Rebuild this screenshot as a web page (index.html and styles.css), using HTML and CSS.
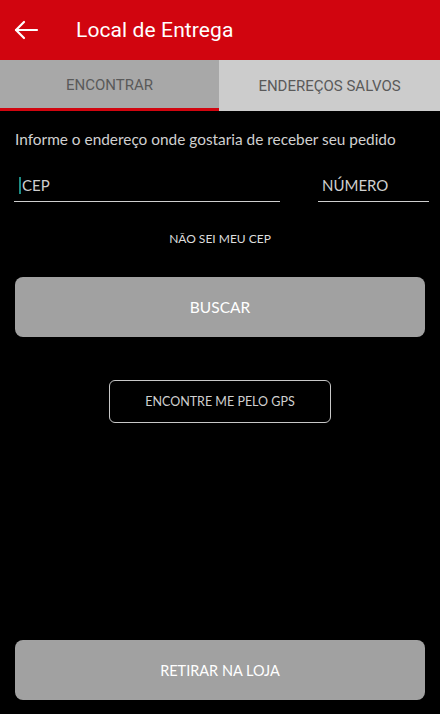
FILE: index.html
```html
<!DOCTYPE html>
<html lang="pt-BR">
<head>
    <meta charset="UTF-8">
    <meta name="viewport" content="width=device-width, initial-scale=1.0">
    <title>Local de Entrega</title>
    <link rel="stylesheet" href="styles.css">
</head>
<body>
    <header class="toolbar">
        <button class="back-btn" aria-label="Voltar">
            <svg width="26" height="20" viewBox="0 0 26 20" fill="none" stroke="#fff" stroke-width="2.2" stroke-linecap="round" stroke-linejoin="round">
                <path d="M24 10H3"/>
                <path d="M11 2L3 10l8 8"/>
            </svg>
        </button>
        <h1 class="toolbar-title">Local de Entrega</h1>
    </header>

    <nav class="tabs">
        <div class="tab tab-active">ENCONTRAR</div>
        <div class="tab">ENDEREÇOS SALVOS</div>
    </nav>

    <main class="content">
        <p class="intro">Informe o endereço onde gostaria de receber seu pedido</p>

        <div class="fields">
            <div class="field field-cep">
                <span class="cursor"></span><span class="placeholder">CEP</span>
            </div>
            <div class="field field-num">
                <span class="placeholder">NÚMERO</span>
            </div>
        </div>

        <a class="link-cep">NÃO SEI MEU CEP</a>

        <button class="btn-solid">BUSCAR</button>

        <button class="btn-outline">ENCONTRE ME PELO GPS</button>

        <div class="spacer"></div>

        <button class="btn-solid btn-store">RETIRAR NA LOJA</button>
    </main>
</body>
</html>
```

FILE: styles.css
```css
body {
    margin: 0;
    padding: 0;
    background-color: #000;
    font-family: 'Lato', 'Open Sans', sans-serif;
    width: 440px;
    height: 714px;
    display: flex;
    flex-direction: column;
    overflow: hidden;
}

.toolbar {
    background-color: #d1050f;
    height: 60px;
    display: flex;
    align-items: center;
    flex-shrink: 0;
}

.back-btn {
    background: none;
    border: none;
    padding: 0;
    margin-left: 13px;
    width: 26px;
    height: 20px;
    display: flex;
}

.toolbar-title {
    margin: 0 0 0 37px;
    color: #fff;
    font-family: 'Roboto', sans-serif;
    font-weight: 400;
    font-size: 21px;
    letter-spacing: 0.1px;
}

.tabs {
    display: flex;
    height: 51px;
    flex-shrink: 0;
}

.tab {
    flex: 1;
    display: flex;
    align-items: center;
    justify-content: center;
    background-color: #cccccc;
    color: #5a5a5a;
    font-family: 'Roboto', sans-serif;
    font-size: 15px;
    box-sizing: border-box;
}

.tab-active {
    flex: 0 0 219px;
    background-color: #a8a8a8;
    border-bottom: 3px solid #d1050f;
    padding-top: 1px;
}

.content {
    flex: 1;
    display: flex;
    flex-direction: column;
    padding: 0 15px 14px;
}

.intro {
    margin: 18px 0 0;
    color: #d0d0d0;
    font-size: 15.4px;
    line-height: 20px;
}

.fields {
    display: flex;
    justify-content: space-between;
    margin-top: 22px;
}

.field {
    height: 31px;
    border-bottom: 1px solid #cfcfcf;
    display: flex;
    align-items: center;
    color: #cfcfcf;
    font-size: 15px;
    box-sizing: border-box;
    padding-bottom: 2px;
}

.field-cep {
    width: 266px;
    margin-left: -1px;
    padding-left: 5px;
}

.field-num {
    width: 111px;
    margin-right: -4px;
    padding-left: 4px;
}

.cursor {
    width: 2px;
    height: 17px;
    background-color: #1e8c84;
    margin-right: 1px;
}

.link-cep {
    align-self: center;
    margin-top: 29px;
    color: #dddddd;
    font-size: 12px;
}

.btn-solid {
    margin-top: 31px;
    height: 60px;
    width: 100%;
    border: none;
    border-radius: 8px;
    background-color: #a1a1a1;
    color: #fff;
    font-family: 'Lato', sans-serif;
    font-size: 15.5px;
}

.btn-store {
    font-size: 14.5px;
}

.btn-outline {
    align-self: center;
    margin-top: 43px;
    width: 222px;
    height: 43px;
    background: none;
    border: 1px solid #c8c8c8;
    border-radius: 6px;
    color: #d0d0d0;
    font-family: 'Lato', sans-serif;
    font-size: 12.5px;
}

.spacer {
    flex: 1;
}
```
